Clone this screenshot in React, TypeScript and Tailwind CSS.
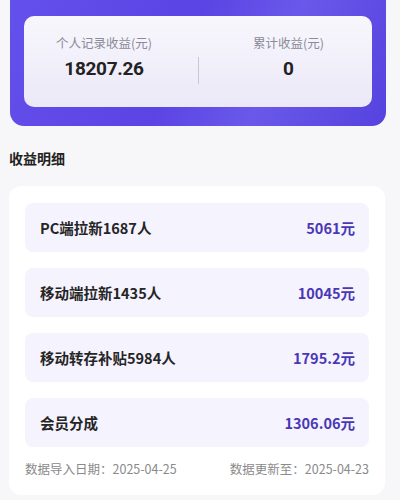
import { FC } from 'react';

const rows = [
  { label: 'PC端拉新1687人', value: '5061元' },
  { label: '移动端拉新1435人', value: '10045元' },
  { label: '移动转存补贴5984人', value: '1795.2元' },
  { label: '会员分成', value: '1306.06元' },
];

const font = { fontFamily: '"Noto Sans CJK SC", "Noto Sans", sans-serif' };
const numFont = { fontFamily: 'Roboto, "Noto Sans", sans-serif' };

const App: FC = () => {
  return (
    <div className="min-h-[500px] w-[400px] overflow-hidden bg-[#f7f7f9]" style={font}>
      {/* summary header */}
      <div className="ml-[10px] w-[376px] rounded-b-[14px] bg-[linear-gradient(115deg,#6450ec_0%,#5a44e4_45%,#6a58ea_68%,#5642de_100%)] px-[14px] pb-[19px] pt-4">
        <div className="flex h-[91px] items-start rounded-[10px] bg-gradient-to-b from-[#f8f7fc] to-[#ebe8f8] pt-[18px]">
          <div className="flex w-[160px] flex-col items-center">
            <span className="text-[12.5px] leading-[18px] text-[#8b8b99]">个人记录收益(元)</span>
            <span
              className="mt-[5px] text-[19px] font-bold leading-[24px] tracking-[-0.3px] text-[#222]"
              style={numFont}
            >
              18207.26
            </span>
          </div>
          <div className="ml-[14px] mt-[23px] h-[27px] w-px bg-[#c9c7d4]" />
          <div className="flex flex-1 flex-col items-center pl-[6px]">
            <span className="text-[12.5px] leading-[18px] text-[#8b8b99]">累计收益(元)</span>
            <span className="mt-[5px] text-[19px] font-bold leading-[24px] text-[#222]" style={numFont}>
              0
            </span>
          </div>
        </div>
      </div>

      <h2 className="ml-[9px] mt-[22px] text-[14px] font-bold leading-[20px] text-[#222]">收益明细</h2>

      <div className="ml-[9px] mt-[18px] w-[376px] rounded-[12px] bg-white px-4 pb-[17px] pt-[17px]">
        <div className="flex flex-col gap-4">
          {rows.map((r) => (
            <div
              key={r.label}
              className="flex h-[49px] items-center justify-between rounded-[8px] bg-[#f5f3fe] pl-[15px] pr-[14px]"
            >
              <span className="text-[14.5px] font-bold text-[#252525]">{r.label}</span>
              <span className="text-[14.5px] font-bold text-[#4a37b6]">{r.value}</span>
            </div>
          ))}
        </div>
        <div className="mt-[13px] flex justify-between text-[12.5px] leading-[18px] text-[#8a8a8a]">
          <span>数据导入日期：2025-04-25</span>
          <span>数据更新至：2025-04-23</span>
        </div>
      </div>
    </div>
  );
};

export default App;
